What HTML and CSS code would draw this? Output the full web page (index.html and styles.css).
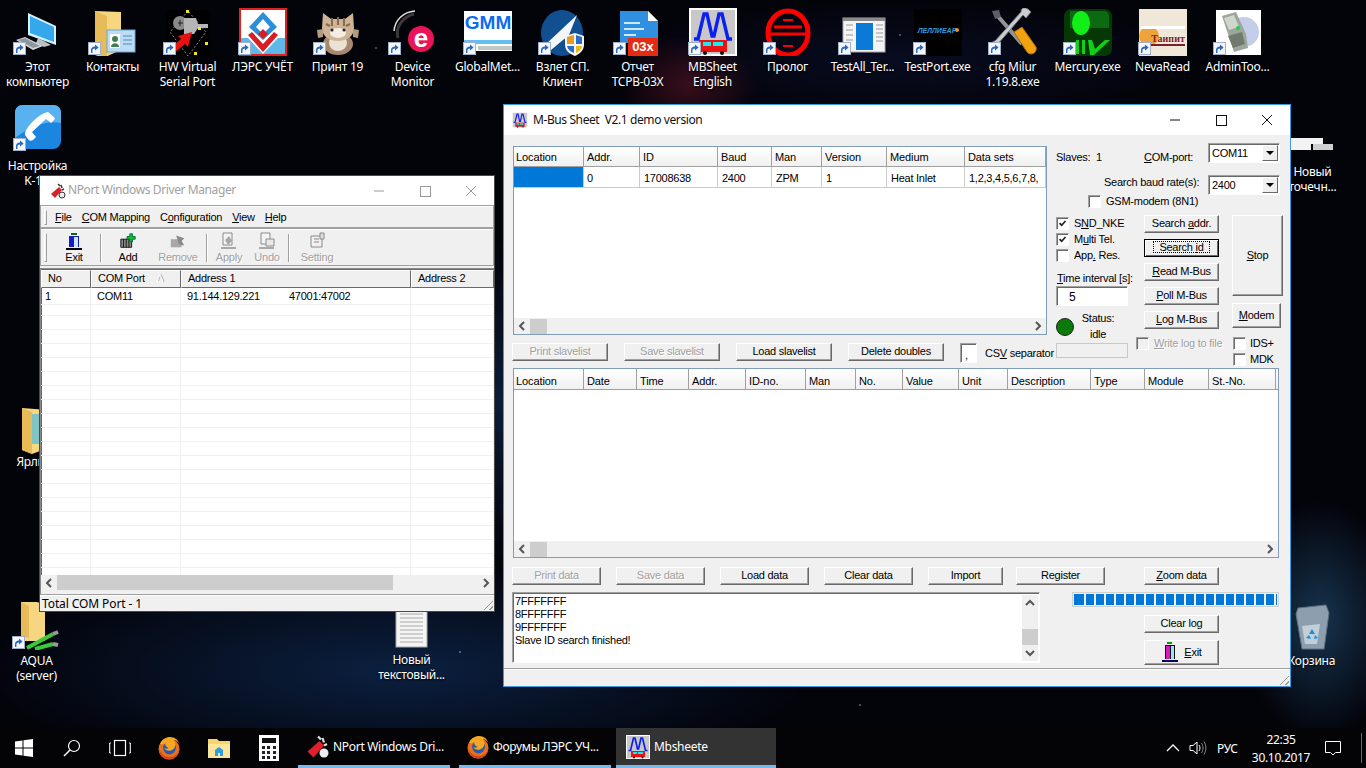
FILE: index.html
```html
<!DOCTYPE html>
<html lang="ru">
<head>
<meta charset="utf-8">
<title>Desktop</title>
<link rel="stylesheet" href="styles.css">
</head>
<body>
<svg class="defs" width="0" height="0" aria-hidden="true">
  <defs>
    <symbol id="sc" viewBox="0 0 13 13"><rect x=".5" y=".5" width="12" height="12" fill="#f4f6fa" stroke="#9fb0c8"/><path d="M3 11V8c0-2.400 1.600-3.600 4-3.600V2.600l3.600 3-3.600 3V6.600c-1.600 0-2.600.8-2.600 2.400V11z" fill="#2a66c0"/></symbol>
    <symbol id="chl" viewBox="0 0 16 16"><path d="M10 4L6 8l4 4" fill="none" stroke="#555" stroke-width="2"/></symbol>
    <symbol id="chr" viewBox="0 0 16 16"><path d="M6 4l4 4-4 4" fill="none" stroke="#555" stroke-width="2"/></symbol>
    <symbol id="chu" viewBox="0 0 16 16"><path d="M4 10l4-4 4 4" fill="none" stroke="#555" stroke-width="2"/></symbol>
    <symbol id="chd" viewBox="0 0 16 16"><path d="M4 6l4 4 4-4" fill="none" stroke="#555" stroke-width="2"/></symbol>
    <symbol id="chk" viewBox="0 0 13 13"><path d="M3 6l2.500 2.500L10 3.500" fill="none" stroke="#222" stroke-width="2"/></symbol>
    <symbol id="mb" viewBox="0 0 48 48"><rect x="1" y="1" width="46" height="46" fill="#c8c8c8" stroke="#fff" stroke-width="2"/><path d="M5 31h4L15 6h3l5 22h2l5-22h3l6 25h4" fill="none" stroke="#0a1ff0" stroke-width="3.400"/><path d="M10 32h28v12H10z" fill="#e81414"/><path d="M14 34h8v4h-8zM24 34h10v4H24z" fill="#22e6ee"/><circle cx="16" cy="45" r="2" fill="#111"/><circle cx="33" cy="45" r="2" fill="#111"/></symbol>
    <symbol id="fx" viewBox="0 0 24 24"><circle cx="12" cy="13" r="10.500" fill="#e8721a"/><circle cx="12.500" cy="12" r="6.400" fill="#2c5aa8"/><path d="M3 8c2-5 6-7 10-7 5 0 8 3 9.500 7-2-3-4-4-6-4 2 2 3 6 0 9-3 3-8 2-9-1 1 1 3 1 4 0-2-1-4-3-3-5-2 1-3 2-5 1z" fill="#f5a623"/><path d="M2 13c0 6 5 10.500 10.500 10.500S22 19 22.500 12c-1 6-5 9-10 9S4 18 2 13z" fill="#d9441c"/></symbol>
  </defs>
</svg>

<main class="desktop">
  <section class="icon-row">
    <div class="dicon"><svg class="ico" viewBox="0 0 48 48"><path d="M14 5l28 13v19L14 27z" fill="#d7f0ff"/><path d="M16 8l24 11v15L16 25z" fill="#34a8ea"/><path d="M24 30l6 3 7 4-7 2-8-4z" fill="#b8c0c8"/><path d="M2 32l9-3 18 9-10 4z" fill="#d5d9dd"/><path d="M4 32l7-2 15 8-7 2z" fill="#8f979e"/></svg><svg class="arrow"><use href="#sc"/></svg><span class="lbl">Этот<br>компьютер</span></div>
    <div class="dicon"><svg class="ico" viewBox="0 0 48 48"><path d="M6 3l26 1v38l-18 8-8-3z" fill="#f6d681"/><path d="M6 3l12 5v42l-12-4z" fill="#e6bb58"/><rect x="18" y="22" width="28" height="22" fill="#bcdcf4" stroke="#6ea6d0"/><rect x="21" y="26" width="10" height="14" fill="#fff"/><circle cx="26" cy="31" r="3" fill="#3f7f4f"/><path d="M22 39c0-5 8-5 8 0z" fill="#3f7f4f"/><path d="M34 28h9M34 32h9M34 36h9" stroke="#4f89b8"/></svg><svg class="arrow"><use href="#sc"/></svg><span class="lbl">Контакты</span></div>
    <div class="dicon"><svg class="ico" viewBox="0 0 48 48"><rect x="2" y="2" width="44" height="46" fill="#000"/><path d="M24 3L6 24l18 24 18-24z" fill="none" stroke="#8b8b8b" stroke-dasharray="2 2"/><circle cx="16" cy="15" r="7" fill="#8a8a8a"/><path d="M14 15h5M16 12v6" stroke="#222"/><path d="M20 10h12l2 6h10v4H34l-4 6H20z" fill="#b5b5b5"/><path d="M22 2h3v3h-3zM34 19h3v3h-3zM41 34h3v3h-3zM7 39h3v3H7zM30 44h3v3h-3z" fill="#f5e61a"/><path d="M28 24L14 28l3 3-12 10 4 5 12-10 3 3z" fill="#e81010"/></svg><svg class="arrow"><use href="#sc"/></svg><span class="lbl">HW Virtual<br>Serial Port</span></div>
    <div class="dicon"><svg class="ico" viewBox="0 0 48 48"><rect x="1" y="1" width="46" height="46" fill="#fff" stroke="#e02020" stroke-width="2"/><path d="M2 30h7l15 16H2zM46 30h-7L24 46h22z" fill="#5fb7e6"/><path d="M24 4l14 15-14 13-14-13z" fill="#2a8fd8"/><path d="M24 11l7 8-7 7-7-7z" fill="#fff"/><path d="M24 21l5 5-5 5-5-5z" fill="#d81e24"/><path d="M9 27l15 17 15-17-4-3-11 12-11-12z" fill="#d81e24"/></svg><svg class="arrow"><use href="#sc"/></svg><span class="lbl">ЛЭРС УЧЁТ</span></div>
    <div class="dicon"><svg class="ico" viewBox="0 0 48 48"><ellipse cx="24" cy="36" rx="15" ry="11" fill="#a58a70"/><ellipse cx="24" cy="35" rx="9" ry="8" fill="#ece2d3"/><path d="M9 5l8 6h14l8-6 1 15c0 8-7 13-16 13S8 28 8 20z" fill="#cdb497"/><path d="M18 10v8M24 9v8M30 10v8M12 16l4 2M36 16l-4 2" stroke="#8a6a4c" stroke-width="2"/><ellipse cx="24" cy="25" rx="8" ry="5" fill="#f4ede2"/><circle cx="18" cy="22" r="1.500" fill="#223"/><circle cx="30" cy="22" r="1.500" fill="#223"/><path d="M3 22l6-1v8l-5 1zM45 22l-6-1v8l5 1z" fill="#b59c80"/></svg><svg class="arrow"><use href="#sc"/></svg><span class="lbl">Принт 19</span></div>
    <div class="dicon"><svg class="ico" viewBox="0 0 48 48"><path d="M26 3C14 4 6 12 5 23" fill="none" stroke="#e0e0e0" stroke-width="1.500"/><path d="M9 30C6 20 13 9 25 6" fill="none" stroke="#3a3a3a" stroke-width="3"/><circle cx="32" cy="31" r="13" fill="#ea1458"/><text x="32" y="39" text-anchor="middle" class="svg-e">e</text></svg><svg class="arrow"><use href="#sc"/></svg><span class="lbl">Device<br>Monitor</span></div>
    <div class="dicon"><svg class="ico" viewBox="0 0 48 48"><rect x="0" y="3" width="48" height="40" fill="#fff"/><text x="24" y="21" text-anchor="middle" class="svg-gmm">GMM</text><rect x="0" y="32" width="48" height="4" fill="#60c0f0"/><rect x="14" y="38" width="34" height="4" fill="#c0c8c4"/></svg><svg class="arrow"><use href="#sc"/></svg><span class="lbl">GlobalMet...</span></div>
    <div class="dicon"><svg class="ico" viewBox="0 0 48 48"><ellipse cx="23" cy="25" rx="21" ry="23" fill="#114f90"/><path d="M6 37L38 7l-8 20-18 15z" fill="#f2f6fa"/><path d="M26 28l10-3 9 3v9c0 6-5 9-9 11-5-2-10-5-10-11z" fill="#f5f5f5"/><path d="M28 29l7-2v9h-7z" fill="#e89a1e"/><path d="M37 27l6 2v7h-6z" fill="#2a6cc8"/><path d="M28 38h7v7c-3-1-6-3-7-7z" fill="#2a6cc8"/><path d="M37 38h6c-1 4-3 6-6 7z" fill="#e8b81e"/></svg><svg class="arrow"><use href="#sc"/></svg><span class="lbl">Взлет СП.<br>Клиент</span></div>
    <div class="dicon"><svg class="ico" viewBox="0 0 48 48"><path d="M6 3h28l10 10v22H6z" fill="#2f8fe0"/><path d="M34 3l10 10H34z" fill="#fff"/><path d="M10 15h16M10 21h20M10 27h12" stroke="#cfe8fb" stroke-width="2"/><rect x="14" y="30" width="30" height="18" fill="#e42c12"/><text x="29" y="43" text-anchor="middle" class="svg-o3x">03x</text></svg><svg class="arrow"><use href="#sc"/></svg><span class="lbl">Отчет<br>TCPB-03X</span></div>
    <div class="dicon"><svg class="ico"><use href="#mb"/></svg><svg class="arrow"><use href="#sc"/></svg><span class="lbl">MBSheet<br>English</span></div>
    <div class="dicon"><svg class="ico" viewBox="0 0 48 48"><ellipse cx="24" cy="25" rx="20" ry="22" fill="none" stroke="#f00" stroke-width="5"/><path d="M10 19h28M6 26h36" stroke="#f00" stroke-width="3"/><path d="M19 12h10M19 38h10" stroke="#f00" stroke-width="2"/></svg><svg class="arrow"><use href="#sc"/></svg><span class="lbl">Пролог</span></div>
    <div class="dicon"><svg class="ico" viewBox="0 0 48 48"><rect x="4" y="10" width="42" height="34" fill="#f4f4f4" stroke="#a8a8a8"/><rect x="4" y="10" width="42" height="3" fill="#8a8a8a"/><rect x="17" y="15" width="17" height="27" fill="#0b7ad6"/><path d="M7 17h7M7 22h7M7 27h7M7 32h7M37 17h7M37 21h7M37 25h7M37 29h7M37 33h7" stroke="#9a9a9a"/></svg><svg class="arrow"><use href="#sc"/></svg><span class="lbl">TestAll_Ter...</span></div>
    <div class="dicon"><svg class="ico" viewBox="0 0 48 48"><rect x="0" y="1" width="48" height="47" fill="#000"/><text x="23" y="25" text-anchor="middle" class="svg-tp">ЛЕЛЛИЕАР</text><circle cx="43" cy="22" r="2" fill="#f09020"/></svg><svg class="arrow"><use href="#sc"/></svg><span class="lbl">TestPort.exe</span></div>
    <div class="dicon"><svg class="ico" viewBox="0 0 48 48"><path d="M7 6l26 30" stroke="#8f959a" stroke-width="4"/><path d="M3 3l7-1 2 7-6 2z" fill="#5a5f63"/><path d="M42 4l-5 6-3-3-26 30c-1 3-5 5-6 2-1-2 1-6 4-6l26-29c0-4 4-7 10 0z" fill="#c9cdd0" stroke="#6f7478"/><path d="M25 24l8-5 14 20c1 3-1 7-5 7-3 0-4-2-6-5z" fill="#f2a210" stroke="#a96c05"/></svg><svg class="arrow"><use href="#sc"/></svg><span class="lbl">cfg Milur<br>1.19.8.exe</span></div>
    <div class="dicon"><svg class="ico" viewBox="0 0 48 48"><rect x="0" y="1" width="48" height="47" rx="7" fill="#063806"/><path d="M6 3h34c3 0 5 2 5 5v12H6z" fill="#0c6a10"/><ellipse cx="17" cy="15" rx="9" ry="12" fill="#12ee18"/><path d="M12 32h3v14h-3zM18 32h3v14h-3zM24 32h4l3 9 10-9h5L30 47h-4z" fill="#12d018"/></svg><svg class="arrow"><use href="#sc"/></svg><span class="lbl">Mercury.exe</span></div>
    <div class="dicon"><svg class="ico" viewBox="0 0 48 48"><rect x="0" y="1" width="48" height="47" fill="#efe8d8"/><circle cx="10" cy="28" r="10" fill="#eea43a"/><rect x="2" y="18" width="44" height="3" fill="#fff"/><rect x="10" y="36" width="36" height="2" fill="#7a1f2c"/><text x="29" y="34" text-anchor="middle" class="svg-neva">Таипит</text></svg><svg class="arrow"><use href="#sc"/></svg><span class="lbl">NevaRead</span></div>
    <div class="dicon"><svg class="ico" viewBox="0 0 48 48"><rect x="2" y="2" width="45" height="45" fill="#fff"/><ellipse cx="30" cy="24" rx="15" ry="15" fill="#c4cdea"/><path d="M8 8l14-4 10 22 2 14-14 4z" fill="#9da69a"/><path d="M10 10l10-3 5 12-10 3z" fill="#cfd6cb"/><circle cx="24" cy="20" r="2" fill="#28c85c"/><path d="M14 28l14-4 3 12-12 4z" fill="#727a70"/></svg><svg class="arrow"><use href="#sc"/></svg><span class="lbl">AdminToo...</span></div>
  </section>

  <div class="dicon free phone"><svg class="ico" viewBox="0 0 48 48"><rect x="1" y="1" width="46" height="44" rx="8" fill="#1c86de"/><path d="M1 9c0-5 3-8 8-8h30c5 0 8 3 8 8v10C30 16 15 24 1 34z" fill="#59b2f0"/><path d="M34 8l6 5c1 1 1 2 0 3l-3 3-5-4-14 13 4 5-3 3c-2 1-4 1-5-1l-3-4C10 25 24 10 34 8z" fill="#fff"/></svg><svg class="arrow"><use href="#sc"/></svg><span class="lbl">Настройка<br>K-1...</span></div>
  <div class="dicon free yarlyk"><svg class="ico" viewBox="0 0 48 48"><path d="M11 2l26 2v38l-16 6-10-4z" fill="#f6d681"/><path d="M11 2l10 4v42l-10-4z" fill="#e6bb58"/><path d="M21 8h16v30H21z" fill="#7ec4c4"/></svg><span class="lbl">Ярлык</span></div>
  <div class="dicon free aqua"><svg class="ico" viewBox="0 0 48 48"><path d="M8 0h16l8 3v36H8z" fill="#f6d681"/><path d="M8 0l8 4v32l-8-2z" fill="#e6bb58"/><path d="M14 46l26-14M22 47l18-5" stroke="#3cc83c" stroke-width="4"/><path d="M40 32l5-2M40 42l5 1" stroke="#9a9a9a" stroke-width="4"/></svg><svg class="arrow"><use href="#sc"/></svg><span class="lbl">AQUA<br>(server)</span></div>
  <div class="dicon free txt"><svg class="ico" viewBox="0 0 48 48"><rect x="8" y="1" width="31" height="46" fill="#f4f4f4" stroke="#aaa"/><path d="M12 6h23M12 10h23M12 14h23M12 18h23M12 22h23M12 26h23M12 30h23M12 34h23M12 38h23M12 42h23" stroke="#a8a8a8"/></svg><span class="lbl">Новый<br>текстовый...</span></div>
  <div class="dicon free bin"><svg class="ico" viewBox="0 0 48 48"><path d="M10 6l28-3 3 8-5 36H14L8 12z" fill="#8d9fae" stroke="#5d6e7c"/><path d="M14 24l18-2-3 20H17z" fill="#c2ced8"/><path d="M24 27l3 5h-6zM18 36l3-3 2 4zM30 36l-3-3-1 4z" fill="#1b8fd8"/></svg><span class="lbl">Корзина</span></div>
  <div class="dicon free dots"><svg class="ico" viewBox="0 0 48 14"><path d="M0 2h34v6H22v6H0z" fill="#f2f2f2"/><path d="M24 8h20v6H24z" fill="#d0d0d0"/></svg><span class="lbl">Новый<br>точечн...</span></div>

  <article class="win nport">
    <header class="title-bar">
      <svg class="title-ico" viewBox="0 0 16 16"><path d="M1 11l8-7 3 3-7 8z" fill="#d8202a"/><path d="M8 1l2 2M11 2l1 3M14 6l-2 1" stroke="#333" stroke-width="1.500"/><circle cx="12" cy="12" r="3" fill="#eee" stroke="#333"/></svg>
      <span class="title-text dim">NPort Windows Driver Manager</span>
      <div class="caps dim">
        <svg viewBox="0 0 46 30"><path d="M18 15h10" stroke="#999"/></svg>
        <svg viewBox="0 0 46 30"><rect x="18.500" y="10.500" width="10" height="10" fill="none" stroke="#999"/></svg>
        <svg viewBox="0 0 46 30"><path d="M18 10l10 10M28 10L18 20" stroke="#999" fill="none"/></svg>
      </div>
    </header>
    <nav class="band menu-band">
      <i class="grip"></i>
      <span><u>F</u>ile</span><span><u>C</u>OM Mapping</span><span>C<u>o</u>nfiguration</span><span><u>V</u>iew</span><span><u>H</u>elp</span>
    </nav>
    <div class="band tool-band">
      <i class="grip tall"></i>
      <div class="tool w-exit"><svg viewBox="0 0 18 18"><rect x="6" y="1" width="6" height="2" fill="#0a6a0a"/><path d="M4 4h10v11H4z" fill="#1818c8"/><path d="M9 5h4v10H9z" fill="#c8e8f8"/><path d="M1 16h16v2H1z" fill="#000"/></svg><span>Exit</span></div>
      <i class="sep"></i>
      <div class="tool w-add"><svg viewBox="0 0 20 18"><path d="M2 7h12v9H2z" fill="#888" stroke="#111"/><path d="M5 7v9M8 7v9M11 7v9" stroke="#111"/><path d="M12 1h3v3h3v3h-3v3h-3V7H9V4h3z" fill="#10c020" stroke="#064"/></svg><span>Add</span></div>
      <div class="tool w-rem off"><svg viewBox="0 0 20 18"><path d="M2 7h12v9H2z" fill="#a8a8a8"/><path d="M8 3l9 3-3 3 3 5-6-1z" fill="#8a8a8a"/></svg><span>Remove</span></div>
      <i class="sep"></i>
      <div class="tool w-apply off"><svg viewBox="0 0 18 18"><path d="M3 1h9v12H3z" fill="#f4f4f4" stroke="#8a8a8a"/><path d="M5 8l4-4 3 5-4 4zM1 15h15v2H1z" fill="#a8a8a8"/></svg><span>Apply</span></div>
      <div class="tool w-undo off"><svg viewBox="0 0 18 18"><path d="M3 1h9v11H3z" fill="#f4f4f4" stroke="#8a8a8a"/><path d="M8 7h8v7H8z" fill="#e8e8e8" stroke="#8a8a8a"/><path d="M1 15h15v2H1z" fill="#a8a8a8"/></svg><span>Undo</span></div>
      <i class="sep"></i>
      <div class="tool w-set off"><svg viewBox="0 0 18 18"><path d="M3 4h11v11H3z" fill="#f0f0f0" stroke="#8a8a8a"/><path d="M6 7h5M6 10h5M12 1h4v6h-4z" stroke="#8a8a8a" fill="#ddd"/></svg><span>Setting</span></div>
    </div>
    <section class="port-list">
      <div class="port-grid port-head"><div>No</div><div class="sorted">COM Port<i>∆</i></div><div>Address 1</div><div>Address 2</div></div>
      <div class="port-grid port-row"><div>1</div><div>COM11</div><div class="addr"><span>91.144.129.221</span><span>47001:47002</span></div><div></div></div>
      <div class="port-grid port-fill"><div></div><div></div><div></div><div></div></div>
      <div class="hscroll"><svg><use href="#chl"/></svg><b class="thumb-nport"></b><svg class="end"><use href="#chr"/></svg></div>
    </section>
    <footer class="nport-status">Total COM Port - 1<i class="resize"></i></footer>
  </article>

  <article class="win mbus">
    <header class="title-bar">
      <svg class="title-ico"><use href="#mb"/></svg>
      <span class="title-text">M-Bus Sheet&nbsp; V2.1 demo version</span>
      <div class="caps">
        <svg viewBox="0 0 46 30"><path d="M18 15h10" stroke="#111"/></svg>
        <svg viewBox="0 0 46 30"><rect x="18.500" y="10.500" width="10" height="10" fill="none" stroke="#111"/></svg>
        <svg viewBox="0 0 46 30"><path d="M18 10l10 10M28 10L18 20" stroke="#111" fill="none"/></svg>
      </div>
    </header>
    <div class="mbus-body">
      <div class="top-area">
        <div class="left-col">
          <section class="list slave-list">
            <div class="slave-grid head"><div>Location</div><div>Addr.</div><div>ID</div><div>Baud</div><div>Man</div><div>Version</div><div>Medium</div><div>Data sets</div></div>
            <div class="slave-grid row"><div class="sel"></div><div class="addr-cell">0</div><div>17008638</div><div>2400</div><div>ZPM</div><div>1</div><div>Heat Inlet</div><div class="clip">1,2,3,4,5,6,7,8,</div></div>
            <div class="grow"></div>
            <div class="hscroll"><svg><use href="#chl"/></svg><b class="thumb-list"></b><svg class="end"><use href="#chr"/></svg></div>
          </section>
          <div class="btn-row slave-btns">
            <button class="btn off" type="button">Print slavelist</button>
            <button class="btn off" type="button">Save slavelist</button>
            <button class="btn" type="button">Load slavelist</button>
            <button class="btn" type="button">Delete doubles</button>
            <div class="csv-box">,</div>
            <span class="csv-label">CS<u>V</u> separator</span>
          </div>
        </div>
        <aside class="right-col">
          <div class="line-com">
            <span class="slaves">Slaves:&nbsp; 1</span>
            <span class="com"><u>C</u>OM-port:</span>
            <div class="combo"><span>COM11</span><i class="drop"></i></div>
          </div>
          <div class="line-baud">
            <div class="baud-text">
              <span class="baud-label">Search baud rate(s):</span>
              <label class="chk gsm"><i class="box"></i><span>GSM-modem (8N1)</span></label>
            </div>
            <div class="combo"><span>2400</span><i class="drop"></i></div>
          </div>
          <div class="tools">
            <div class="col-a">
              <label class="chk"><i class="box"><svg><use href="#chk"/></svg></i><span>S<u>N</u>D_NKE</span></label>
              <label class="chk"><i class="box"><svg><use href="#chk"/></svg></i><span>M<u>u</u>lti Tel.</span></label>
              <label class="chk"><i class="box"></i><span>App<u>.</u> Res.</span></label>
              <span class="time-label"><u>T</u>ime interval [s]:</span>
              <div class="time-input">5</div>
              <div class="status-row"><i class="led"></i><div class="status-text">Status:<br>idle</div></div>
              <div class="ro-box"></div>
            </div>
            <div class="col-b">
              <button class="btn" type="button">Search <u>a</u>ddr.</button>
              <button class="btn focus" type="button"><span>Search <u>i</u>d</span></button>
              <button class="btn" type="button"><u>R</u>ead M-Bus</button>
              <button class="btn" type="button"><u>P</u>oll M-Bus</button>
              <button class="btn" type="button"><u>L</u>og M-Bus</button>
              <label class="chk write off-text"><i class="box dis"></i><span><u>W</u>rite log to file</span></label>
            </div>
            <div class="col-c">
              <button class="btn stop" type="button"><u>S</u>top</button>
              <button class="btn modem" type="button"><u>M</u>odem</button>
              <label class="chk ids"><i class="box"></i><span>IDS+</span></label>
              <label class="chk"><i class="box"></i><span>MDK</span></label>
            </div>
          </div>
        </aside>
      </div>
      <section class="list data-list">
        <div class="data-grid head"><div>Location</div><div>Date</div><div>Time</div><div>Addr.</div><div>ID-no.</div><div>Man</div><div>No.</div><div>Value</div><div>Unit</div><div>Description</div><div>Type</div><div>Module</div><div>St.-No.</div><div></div></div>
        <div class="grow"></div>
        <div class="hscroll"><svg><use href="#chl"/></svg><b class="thumb-list"></b><svg class="end"><use href="#chr"/></svg></div>
      </section>
      <div class="btn-row data-btns">
        <button class="btn off" type="button">Print data</button>
        <button class="btn off" type="button">Save data</button>
        <button class="btn" type="button">Load data</button>
        <button class="btn" type="button">Clear data</button>
        <button class="btn b-import" type="button">Import</button>
        <button class="btn b-reg" type="button">Register</button>
        <button class="btn b-zoom" type="button"><u>Z</u>oom data</button>
      </div>
      <div class="log-area">
        <div class="log">
          <div class="log-text">7FFFFFFF<br>8FFFFFFF<br>9FFFFFFF<br>Slave ID search finished!</div>
          <div class="vscroll"><svg><use href="#chu"/></svg><b class="thumb-log"></b><svg><use href="#chd"/></svg></div>
        </div>
        <div class="log-side">
          <div class="progress"></div>
          <button class="btn b-clear" type="button">Clear lo<u>g</u></button>
          <button class="btn b-exit" type="button"><svg viewBox="0 0 18 20"><rect x="6" y="0" width="5" height="2" fill="#0a9a0a"/><path d="M4 3h10v14H4z" fill="#111"/><path d="M5 4h4v13H5z" fill="#d818c8"/><path d="M10 4h3v13h-3z" fill="#8fe8f8"/><path d="M1 18h16v2H1z" fill="#000060"/></svg><span><u>E</u>xit</span></button>
        </div>
      </div>
    </div>
    <footer class="mbus-status"><i class="resize"></i></footer>
  </article>

  <footer class="taskbar">
    <div class="pin start"><svg viewBox="0 0 18 18"><path d="M0 2.500l7.500-1v7H0zM8.500 1.300L18 0v8.500H8.500zM0 9.500h7.500v7l-7.500-1zM8.500 9.500H18V18l-9.500-1.300z" fill="#fff"/></svg></div>
    <div class="pin"><svg viewBox="0 0 18 18"><circle cx="11" cy="7" r="5.500" fill="none" stroke="#fff" stroke-width="1.200"/><path d="M7 11l-6 6" stroke="#fff" stroke-width="1.500"/></svg></div>
    <div class="pin"><svg class="tv" viewBox="0 0 22 18"><rect x="5.500" y="1.500" width="11" height="15" fill="none" stroke="#fff" stroke-width="1.200"/><path d="M2 4H.7v10H2M20 4h1.300v10H20" fill="none" stroke="#fff"/></svg></div>
    <div class="pin app"><svg><use href="#fx"/></svg></div>
    <div class="pin app"><svg viewBox="0 0 24 24"><path d="M1 3h9l2 2h11v17H1z" fill="#f5d56c"/><path d="M1 8h22v14H1z" fill="#fbe59a"/><path d="M8 20v-6l4-3 4 3v6h-3v-3h-2v3z" fill="#2f9be0"/></svg></div>
    <div class="pin app"><svg viewBox="0 0 20 26"><rect width="20" height="26" fill="#fff"/><rect x="3" y="3" width="14" height="5" fill="#111"/><path d="M3 11h3v3H3zM8 11h3v3H8zM14 11h3v3h-3zM3 16h3v3H3zM8 16h3v3H8zM14 16h3v3h-3zM3 21h3v3H3zM8 21h3v3H8zM14 21h3v3h-3z" fill="#222"/></svg></div>
    <div class="task t-nport"><svg viewBox="0 0 16 16"><path d="M1 11l8-7 3 3-7 8z" fill="#e0202a"/><path d="M8 1l2 2M11 2l1 3M14 6l-2 1" stroke="#ddd" stroke-width="1.500"/><circle cx="12" cy="12" r="3" fill="#eee"/></svg><span>NPort Windows Dri...</span></div>
    <div class="task t-fx"><svg><use href="#fx"/></svg><span>Форумы ЛЭРС УЧ...</span></div>
    <div class="task t-mb"><svg><use href="#mb"/></svg><span>Mbsheete</span></div>
    <div class="tray">
      <svg class="chev" viewBox="0 0 14 8"><path d="M1 7l6-6 6 6" fill="none" stroke="#fff" stroke-width="1.300"/></svg>
      <svg class="spk" viewBox="0 0 18 16"><path d="M1 5.500h3l4-3.500v12l-4-3.500H1z" fill="none" stroke="#fff"/><path d="M10 5c1.300 2 1.300 4 0 6" fill="none" stroke="#fff"/><path d="M12.500 3c2 3 2 7 0 10M15 1.500c2.500 4 2.500 9 0 13" fill="none" stroke="#888"/></svg>
      <span class="lang">РУС</span>
      <div class="clock"><span>22:35</span><span>30.10.2017</span></div>
      <svg class="note" viewBox="0 0 16 15"><path d="M.5.500h15v11h-5L8 14l-2.500-2.500h-5z" fill="none" stroke="#fff"/></svg>
      <i class="show"></i>
    </div>
  </footer>
</main>
</body>
</html>
```

FILE: styles.css
```css
* { box-sizing: border-box; }
html, body { margin: 0; height: 100%; overflow: hidden; }
.defs { position: absolute; }
.desktop {
  position: relative; width: 1366px; height: 768px; overflow: hidden;
  font-family: "Liberation Sans", sans-serif; font-size: 11px; color: #000;
  background:
    radial-gradient(1.500px 1.500px at 460px 652px, #7f9fc4, transparent),
    radial-gradient(1.500px 1.500px at 420px 610px, #6f8fb4, transparent),
    radial-gradient(1.500px 1.500px at 860px 705px, #6f8fb4, transparent),
    radial-gradient(1px 1px at 376px 48px, #ccc, transparent),
    radial-gradient(1.500px 1.500px at 900px 35px, #6f8fb4, transparent),
    radial-gradient(ellipse 70px 50px at 688px 85px, rgba(120,25,45,.45), transparent),
    radial-gradient(ellipse 420px 110px at 400px 670px, #0b2040, transparent),
    radial-gradient(ellipse 80px 120px at 1320px 620px, #17344f, transparent),
    radial-gradient(ellipse 120px 160px at 500px 400px, #0b1c38, transparent),
    radial-gradient(ellipse 300px 60px at 900px 60px, #080c20, transparent),
    #03030a;
}

/* Desktop icons */
.icon-row { display: flex; padding-top: 8px; }
.dicon { position: relative; width: 75px; flex: none; display: flex; flex-direction: column; align-items: center; }
.ico { width: 48px; height: 48px; display: block; }
.arrow { position: absolute; left: 13px; top: 34px; width: 13px; height: 13px; }
.lbl {
  margin-top: 3px; color: #fff; font: 12px/15px "Noto Sans", sans-serif; letter-spacing: -.25px; text-align: center; white-space: nowrap;
  text-shadow: 0 1px 2px #000;
}
.free { position: absolute; }
.phone { left: 0; top: 104px; }
.yarlyk { left: -3px; top: 406px; }
.aqua { left: -1px; top: 602px; }
.txt { left: 374px; top: 600px; }
.bin { left: 1274px; top: 602px; }
.dots { left: 1275px; top: 136px; }
.phone .lbl { margin-top: 6px; }
.aqua .lbl { margin-top: 3px; }
.txt .lbl { margin-top: 4px; }
.bin .lbl { margin-top: 3px; }
.yarlyk .lbl { margin-top: 0; }
.dots .lbl { margin-top: 14px; }
.dots .ico { height: 14px; }

.svg-e { font: bold 26px "Liberation Sans", sans-serif; fill: #fff; }
.svg-gmm { font: bold 19px "Liberation Sans", sans-serif; fill: #0a6cf0; }
.svg-o3x { font: bold 13px "Liberation Sans", sans-serif; fill: #fff; }
.svg-tp { font: italic bold 7px "Liberation Sans", sans-serif; fill: #2f9fe0; }
.svg-neva { font: bold 10px "Liberation Serif", serif; fill: #7a1f2c; }

/* Windows */
.win { position: absolute; display: flex; flex-direction: column; background: #f0f0f0; z-index: 2; letter-spacing: -.25px; }
.title-bar { height: 30px; background: #fff; display: flex; align-items: center; flex: none; }
.title-ico { width: 16px; height: 16px; margin-left: 8px; flex: none; }
.title-text { margin-left: 5px; padding-bottom: 2px; font: 12px "Noto Sans", sans-serif; letter-spacing: -.4px; color: #111; white-space: nowrap; }
.title-text.dim { color: #a0a0a0; margin-left: 2px; }
.caps { margin-left: auto; display: flex; }
.caps svg { width: 46px; height: 30px; display: block; }

/* Raised / sunken controls */
.btn {
  display: block; text-align: center; padding: 0 0 2px; height: 18px;
  font: 11px "Liberation Sans", sans-serif; letter-spacing: -.25px; color: #000; background: #f0f0f0; white-space: nowrap;
  border: 1px solid; border-color: #fff #696969 #696969 #fff; box-shadow: inset -1px -1px 0 #a0a0a0;
}
.btn.off { color: #a0a0a0; text-shadow: 1px 1px 0 #fff; }
.btn.focus { outline: 1px solid #000; outline-offset: -1px; border-color: #000; box-shadow: inset 1px 1px 0 #fff, inset -1px -1px 0 #696969; }
.btn.focus span { display: inline-block; outline: 1px dotted #000; padding: 0 5px; line-height: 10px; }
.box, .combo, .csv-box, .time-input, .log {
  border: 1px solid; border-color: #a0a0a0 #fff #fff #a0a0a0; box-shadow: inset 1px 1px 0 #696969;
  background: #fff;
}

/* NPort window */
.nport { left: 39px; top: 175px; width: 456px; height: 437px; outline: 1px solid #4a4a4a; outline-offset: -1px; padding: 1px; }
.nport .title-bar { height: 29px; }
.nport .title-ico { margin-left: 10px; }
.nport .caps { margin-right: 0; }
.band { display: flex; align-items: center; flex: none; border: 1px solid; border-color: #a0a0a0 #fff #a0a0a0 #fff; box-shadow: inset 0 1px 0 #fff; }
.menu-band { height: 23px; padding: 1px 0 0 3px; gap: 10px; outline: 1px solid #a0a0a0; outline-offset: -1px; }
.menu-band span { white-space: nowrap; }
.grip { width: 3px; height: 15px; border: 1px solid; border-color: #fff #a0a0a0 #a0a0a0 #fff; margin-right: -2px; flex: none; }
.grip.tall { height: 29px; margin-right: 3px; }
.tool-band { height: 38px; padding: 1px 0 0 3px; outline: 1px solid #a0a0a0; outline-offset: -1px; }
.tool { display: flex; flex-direction: column; align-items: center; flex: none; }
.tool svg { width: 18px; height: 18px; display: block; margin-bottom: 1px; }
.tool span { line-height: 13px; }
.tool.off span { color: #a0a0a0; text-shadow: 1px 1px 0 #fff; }
.w-exit { width: 48px; }
.w-add { width: 48px; }
.w-rem { width: 52px; }
.w-apply { width: 38px; }
.w-undo { width: 38px; }
.w-set { width: 50px; }
.sep { width: 2px; height: 28px; border-left: 1px solid #a0a0a0; border-right: 1px solid #fff; flex: none; margin: 0 2px; }
.port-list { flex: 1; min-height: 0; margin: 2px 0 0; display: flex; flex-direction: column; background: #fff; border: 1px solid #8a8a8a; border-right: 0; border-bottom: 0; box-shadow: inset 1px 1px 0 #696969; }
.port-grid { display: grid; grid-template-columns: 50px 90px 230px 83px; flex: none; }
.port-head { height: 18px; margin-top: 1px; background: #f0f0f0; }
.port-head div { border: 1px solid; border-color: #fff #696969 #696969 #fff; padding: 1px 0 0 6px; white-space: nowrap; position: relative; }
.sorted i { position: absolute; right: 17px; top: 1px; font-style: normal; color: #fff; text-shadow: 1px 0 0 #a0a0a0; }
.port-row { height: 14px; line-height: 16px; }
.port-row > div { padding-left: 6px; border-right: 1px solid #f0f0f0; border-bottom: 1px solid #f0f0f0; }
.port-row > div:first-child { padding-left: 4px; }
.addr { display: flex; gap: 29px; }
.port-fill { flex: 1; background: repeating-linear-gradient(to bottom, transparent 0 13px, #f0f0f0 13px 14px); }
.port-fill div { border-right: 1px solid #f0f0f0; }
.hscroll { flex: none; height: 16px; display: flex; align-items: center; background: #f0f0f0; }
.hscroll svg { width: 16px; height: 16px; flex: none; }
.hscroll .end { margin-left: auto; }
.thumb-nport { width: 336px; height: 15px; background: #cdcdcd; }
.thumb-list { width: 17px; height: 15px; background: #cdcdcd; }
.port-list .hscroll { height: 15px; margin-bottom: 4px; box-shadow: 0 4px 0 #f0f0f0; }
.nport-status { height: 17px; flex: none; position: relative; padding: 2px 0 0 2px; font: 12px "Noto Sans", sans-serif; letter-spacing: -.1px; line-height: 14px; border-top: 1px solid #a0a0a0; box-shadow: inset 0 1px 0 #fff; }
.resize { position: absolute; right: 1px; bottom: 1px; width: 12px; height: 12px; background: repeating-linear-gradient(135deg, transparent 0 2px, #999 2px 3px, transparent 3px 4px); clip-path: polygon(100% 0, 100% 100%, 0 100%); }

/* M-Bus window */
.mbus { left: 503px; top: 104px; width: 788px; height: 583px; border: 1px solid #3b9ae0; }
.mbus-body { flex: 1; min-height: 0; padding: 8px 0 0 9px; display: flex; flex-direction: column; }
.mbus .caps { margin-right: 0; }
.top-area { display: flex; height: 225px; flex: none; }
.left-col { width: 543px; flex: none; padding-top: 3px; display: flex; flex-direction: column; }
.list { background: #fff; border: 1px solid #7f9db9; display: flex; flex-direction: column; flex: none; }
.slave-list { width: 534px; height: 189px; }
.grow { flex: 1; }
.slave-grid { display: grid; grid-template-columns: 70px 56px 78px 54px 50px 65px 78px 81px; flex: none; }
.head { height: 20px; background: linear-gradient(#fff, #f0f0f0); border-bottom: 1px solid #a0a0a0; letter-spacing: -.1px; }
.head div { border-right: 1px solid #a0a0a0; padding: 4px 0 0 3px; white-space: nowrap; overflow: hidden; }
.head div:first-child { padding-left: 2px; }
.row { height: 21px; border-bottom: 1px solid #ccc; }
.row div { border-right: 1px solid #ccc; padding: 5px 0 0 4px; white-space: nowrap; overflow: hidden; }
.row .addr-cell { padding-left: 3px; }
.row .sel { background: #0078d7; }
.btn-row { display: flex; flex: none; }
.slave-btns { margin: 8px 0 0 -1px; align-items: flex-start; height: 20px; }
.slave-btns .btn { width: 96px; margin-right: 16px; }
.slave-btns .btn:nth-child(4) { margin-right: 0; }
.csv-box { width: 17px; height: 20px; margin-left: 16px; padding: 4px 0 0 4px; font-size: 11px; line-height: 14px; }
.csv-label { margin: 4px 0 0 8px; white-space: nowrap; }
.right-col { width: 228px; flex: none; }
.line-com { display: flex; align-items: flex-end; height: 20px; }
.slaves { width: 88px; }
.com { width: 64px; }
.line-com span { line-height: 12px; margin-bottom: 0; }
.line-com .combo span, .line-baud .combo span { margin-left: 3px; line-height: 16px; }
.combo { width: 72px; height: 20px; display: flex; align-items: center; margin-left: 0; }
.drop { margin-left: auto; margin-right: 1px; width: 16px; height: 16px; background: #f0f0f0; border: 1px solid; border-color: #fff #696969 #696969 #fff; position: relative; flex: none; }
.drop::after { content: ""; position: absolute; left: 3px; top: 5px; border: 4px solid transparent; border-top-color: #000; border-bottom: 0; }
.line-baud { display: flex; margin-top: 12px; height: 40px; }
.baud-text { width: 152px; display: flex; flex-direction: column; }
.baud-label { padding-left: 48px; line-height: 14px; white-space: nowrap; }
.chk { display: flex; align-items: center; gap: 5px; height: 16px; white-space: nowrap; }
.box { width: 13px; height: 13px; flex: none; display: block; }
.box svg { width: 11px; height: 11px; display: block; }
.box.dis { background: #f0f0f0; }
.gsm { padding-left: 32px; margin-top: 4px; }
.line-baud .combo { flex: none; }
.tools { display: flex; margin-top: 0; }
.col-a { width: 72px; margin-right: 16px; flex: none; }
.time-label { display: block; margin: 8px 0 0 1px; line-height: 14px; white-space: nowrap; }
.time-input { height: 20px; margin-top: 1px; padding: 3px 0 0 12px; font-size: 12px; line-height: 14px; }
.status-row { display: flex; margin-top: 9px; height: 27px; }
.led { width: 18px; height: 18px; border-radius: 50%; background: #0a7a0a; border: 1px solid #222; margin-top: 3px; flex: none; }
.status-text { width: 48px; margin-top: -5px; text-align: center; line-height: 16px; white-space: nowrap; }
.ro-box { height: 15px; margin-top: 1px; border: 1px solid #c8c8c8; }
.col-b { width: 75px; margin-right: 13px; flex: none; display: flex; flex-direction: column; }
.col-b .btn { margin-bottom: 6px; }
.write { margin: 0 0 0 -8px; }
.off-text span { color: #a0a0a0; text-shadow: 1px 1px 0 #fff; }
.col-c { width: 51px; flex: none; display: flex; flex-direction: column; }
.stop { height: 81px; width: 51px; }
.modem { height: 25px; width: 49px; margin-top: 7px; }
.ids { margin-top: 7px; }
.col-c .chk { padding-left: 1px; gap: 4px; }
.data-list { width: 766px; height: 190px; }
.data-grid { display: grid; grid-template-columns: 70px 53px 52px 57px 60px 50px 47px 56px 49px 83px 54px 64px 67px 3px; flex: none; overflow: hidden; }
.data-grid.head { height: 21px; }
.data-grid.head div { padding-top: 6px; }
.data-btns { margin: 9px 0 0 -1px; }
.data-btns .btn { width: 89px; margin-right: 15px; }
.data-btns .b-import { width: 75px; margin-right: 13px; }
.data-btns .b-reg { width: 89px; margin-right: 39px; }
.data-btns .b-zoom { width: 75px; margin-right: 0; }
.log-area { display: flex; margin: 7px 0 0 -1px; }
.log { width: 528px; height: 71px; display: flex; }
.log-text { flex: 1; padding: 2px 0 0 2px; line-height: 13px; }
.vscroll { width: 16px; display: flex; flex-direction: column; background: #f0f0f0; margin: 2px 1px 1px 0; }
.vscroll svg { width: 16px; height: 16px; flex: none; }
.vscroll svg:last-child { margin-top: auto; }
.thumb-log { height: 18px; margin-top: 18px; background: #cdcdcd; display: block; }
.log-side { margin-left: 32px; width: 207px; display: flex; flex-direction: column; }
.progress { height: 15px; padding: 0; background: repeating-linear-gradient(to right, #0078d7 0 8px, #f0f0f0 8px 10px); background-position: 2px 0; border: 2px solid #f0f0f0; outline: 1px solid #d0d0d0; outline-offset: -1px; }
.b-clear, .b-exit { width: 75px; margin-left: 72px; }
.b-clear { margin-top: 8px; }
.b-exit { display: flex; align-items: center; justify-content: center; height: 25px; margin-top: 7px; gap: 5px; padding: 0 0 1px; }
.b-exit svg { width: 18px; height: 20px; }
.mbus-status { position: relative; height: 18px; margin-top: 4px; flex: none; border-top: 1px solid #a0a0a0; box-shadow: inset 0 1px 0 #fff; }

/* Taskbar */
.taskbar { position: absolute; left: 0; right: 0; bottom: 0; height: 40px; background: #040406; display: flex; z-index: 3; color: #fff; font: 12px "Noto Sans", sans-serif; letter-spacing: -.3px; }
.pin { width: 48px; display: flex; align-items: center; justify-content: center; flex: none; }
.pin svg { width: 18px; height: 18px; }
.pin svg.tv { width: 22px; }
.pin.app { width: 50px; }
.pin.app svg { width: 24px; height: 26px; }
.task { position: relative; height: 40px; display: flex; align-items: center; padding-left: 8px; gap: 3px; flex: none; white-space: nowrap; border-bottom: 3px solid #76b9ed; }
.task svg { width: 24px; height: 24px; flex: none; }
.t-nport { width: 152px; margin-left: 4px; }
.t-fx { width: 152px; margin-left: 9px; padding-left: 7px; gap: 3px; }
.t-mb { width: 160px; margin-left: 5px; background: #333; padding-left: 10px; gap: 4px; }
.t-mb svg { width: 24px; height: 30px; }
.tray { margin-left: auto; display: flex; align-items: center; height: 40px; }
.chev { width: 14px; height: 8px; margin-right: 9px; }
.spk { width: 18px; height: 16px; margin-right: 10px; }
.lang { width: 24px; margin-right: 12px; }
.clock { width: 56px; display: flex; flex-direction: column; align-items: center; line-height: 18px; margin-right: 16px; padding-top: 2px; }
.note { width: 16px; height: 15px; margin-right: 20px; }
.show { width: 1px; height: 30px; background: #666; margin-right: 4px; }
```
